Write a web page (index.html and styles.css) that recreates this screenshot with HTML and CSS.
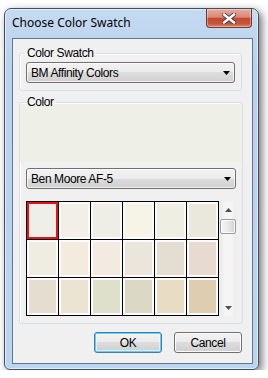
FILE: index.html
```html
<!DOCTYPE html>
<html lang="en">
<head>
  <meta charset="UTF-8">
  <title>Choose Color Swatch</title>
  <link rel="stylesheet" href="styles.css">
</head>
<body>
  <div class="window">
    <div class="titlebar">
      <span class="title">Choose Color Swatch</span>
      <div class="close">
        <svg width="14" height="11" viewBox="0 0 14 11">
          <path d="M2 1.5 L12 9.5 M12 1.5 L2 9.5" stroke="#3b3b3b" stroke-width="4.2" stroke-linecap="square"/>
          <path d="M2 1.5 L12 9.5 M12 1.5 L2 9.5" stroke="#ffffff" stroke-width="2.4" stroke-linecap="square"/>
        </svg>
      </div>
    </div>
    <div class="client">
      <fieldset class="group">
        <legend>Color Swatch</legend>
        <div class="combo">
          <span>BM Affinity Colors</span>
          <svg class="arrow" width="7" height="4" viewBox="0 0 7 4"><path d="M0 0 H7 L3.5 4 Z" fill="#000"/></svg>
        </div>
      </fieldset>
      <fieldset class="group color-group">
        <legend>Color</legend>
        <div class="preview"></div>
        <div class="combo">
          <span>Ben Moore AF-5</span>
          <svg class="arrow" width="7" height="4" viewBox="0 0 7 4"><path d="M0 0 H7 L3.5 4 Z" fill="#000"/></svg>
        </div>
        <div class="picker">
          <div class="swatches">
            <div class="cell selected"><i style="background:#eeefe8"></i></div>
            <div class="cell"><i style="background:#f1efe7"></i></div>
            <div class="cell"><i style="background:#eeede6"></i></div>
            <div class="cell"><i style="background:#f6f4e6"></i></div>
            <div class="cell"><i style="background:#eeeee3"></i></div>
            <div class="cell"><i style="background:#eae8dc"></i></div>
            <div class="cell"><i style="background:#efece1"></i></div>
            <div class="cell"><i style="background:#f3ebde"></i></div>
            <div class="cell"><i style="background:#f3ebe1"></i></div>
            <div class="cell"><i style="background:#ebe6dc"></i></div>
            <div class="cell"><i style="background:#e4ddd1"></i></div>
            <div class="cell"><i style="background:#e6dad1"></i></div>
            <div class="cell"><i style="background:#e4ddd0"></i></div>
            <div class="cell"><i style="background:#ebe4d2"></i></div>
            <div class="cell"><i style="background:#dfe0cc"></i></div>
            <div class="cell"><i style="background:#dcd8c6"></i></div>
            <div class="cell"><i style="background:#e8dcc4"></i></div>
            <div class="cell"><i style="background:#dfcdb1"></i></div>
          </div>
          <div class="scrollbar">
            <div class="sb-btn">
              <svg width="7" height="4" viewBox="0 0 7 4"><path d="M3.5 0 L7 4 H0 Z" fill="#505050"/></svg>
            </div>
            <div class="thumb"></div>
            <div class="track"></div>
            <div class="sb-btn">
              <svg width="7" height="4" viewBox="0 0 7 4"><path d="M0 0 H7 L3.5 4 Z" fill="#505050"/></svg>
            </div>
          </div>
        </div>
      </fieldset>
      <div class="buttons">
        <button class="btn default">OK</button>
        <button class="btn">Cancel</button>
      </div>
    </div>
  </div>
</body>
</html>
```

FILE: styles.css
```css
*{
  margin: 0;
  padding: 0;
  box-sizing: border-box;
}
body{
  background: #ffffff;
  font: 11px/16px "Liberation Sans", Arial, sans-serif;
  letter-spacing: -0.3px;
  color: #000;
}
.window{
  width: 255px;
  height: 362px;
  margin: 8px 0 0 4px;
  border: 1px solid #3d4f63;
  border-radius: 7px 7px 6px 6px;
  background: linear-gradient(#c4daf1, #b9d1ec 60px, #bcd5ef);
  box-shadow: inset 0 0 0 1px rgba(255,255,255,0.55), 3px 3px 9px rgba(0,0,0,0.55);
  display: flex;
  flex-direction: column;
  padding: 0 5px 5px 7px;
}
.titlebar{
  height: 29px;
  display: flex;
  justify-content: space-between;
}
.title{
  padding-top: 6px;
  font: 12px/16px "Noto Sans", sans-serif;
  letter-spacing: 0;
}
.close{
  width: 46px;
  height: 19px;
  margin-right: 1px;
  border: 1px solid #6b3b35;
  border-top: none;
  border-radius: 0 0 4px 4px;
  background: linear-gradient(#e9ab9c, #d98a77 45%, #c24a33 52%, #c75439 80%, #dc8468);
  box-shadow: inset 0 0 0 1px rgba(255,255,255,0.35);
  display: flex;
  align-items: center;
  justify-content: center;
}
.client{
  flex: 1;
  background: #f0f0f0;
  border: 1px solid #62768c;
  padding: 6px 10px 0 6px;
  display: flex;
  flex-direction: column;
}
.group{
  border: 1px solid #d5dfe5;
  border-radius: 3px;
  padding: 1px 6px 7px 6px;
  box-shadow: inset 1px 1px 0 #fff;
}
.group legend{
  margin-left: -1px;
  padding: 0 2px;
  line-height: 16px;
  font-size: 12px;
  letter-spacing: -0.4px;
}
.combo{
  height: 21px;
  border: 1px solid #707070;
  border-radius: 3px;
  background: linear-gradient(#f2f2f2, #ebebeb 50%, #dddddd 50%, #cfcfcf);
  box-shadow: inset 0 0 0 1px rgba(255,255,255,0.7);
  display: flex;
  align-items: center;
  justify-content: space-between;
  padding: 0 4px 0 4px;
  font-size: 12px;
  letter-spacing: -0.4px;
}
.color-group{
  margin-top: 3px;
  padding-bottom: 7px;
}
.preview{
  height: 59px;
  margin: -7px -6px 5px;
  background: #eeefe7;
}
.picker{
  display: flex;
  gap: 1px;
  margin-top: 12px;
}
.swatches{
  display: grid;
  grid-template-columns: repeat(6, 31px);
  grid-auto-rows: 37px;
  gap: 1px;
  border: 1px solid #000;
  background: #000;
}
.cell{
  background: #fbfbfb;
  padding: 2px;
}
.cell i{
  display: block;
  height: 100%;
}
.cell.selected{
  border: 2px solid #e8101a;
  padding: 0;
}
.scrollbar{
  width: 16px;
  display: flex;
  flex-direction: column;
  background: linear-gradient(to right, #e9e9e9, #f5f5f5 30%, #f5f5f5 70%, #ececec);
}
.sb-btn{
  height: 17px;
  display: flex;
  align-items: center;
  justify-content: center;
}
.thumb{
  height: 15px;
  margin-top: 1px;
  border: 1px solid #9a9a9a;
  border-radius: 2px;
  background: linear-gradient(to right, #f7f7f7, #e4e4e4 60%, #d2d2d2);
  box-shadow: inset 0 0 0 1px rgba(255,255,255,0.8);
}
.track{
  flex: 1;
}
.buttons{
  display: flex;
  justify-content: flex-end;
  gap: 12px;
  margin-top: 8px;
}
.btn{
  width: 68px;
  height: 21px;
  font: 12px "Liberation Sans", Arial, sans-serif;
  letter-spacing: -0.4px;
  border: 1px solid #707070;
  border-radius: 3px;
  background: linear-gradient(#f2f2f2, #ebebeb 50%, #dddddd 50%, #cfcfcf);
  box-shadow: inset 0 0 0 1px #fcfcfc;
  color: #000;
}
.btn.default{
  border-color: #3c7fb1;
  box-shadow: inset 0 0 0 1px #5fd2f3, inset 0 0 0 2px rgba(255,255,255,0.5);
}
```
